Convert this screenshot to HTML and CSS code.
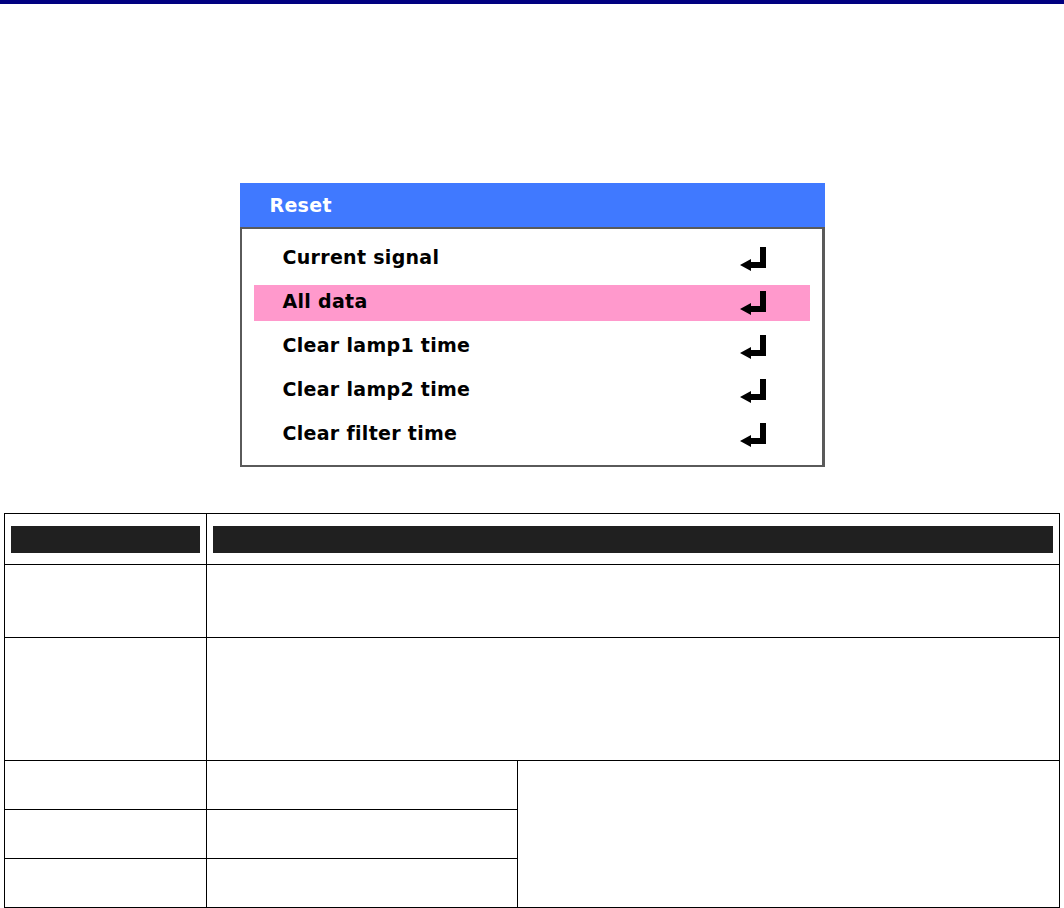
FILE: index.html
```html
<!DOCTYPE html>
<html lang="en">
<head>
<meta charset="utf-8">
<title>Reset</title>
<link rel="stylesheet" href="styles.css">
</head>
<body>
<div class="topbar"></div>
<div class="menu">
  <div class="menu-head">Reset</div>
  <div class="menu-body">
    <div class="item"><span class="label">Current signal</span><svg class="enter" viewBox="0 0 27 24" width="27" height="24"><path d="M20 0H26V21H11V24L0 18L11 12V15H20Z"/></svg></div>
    <div class="item active"><span class="label">All data</span><svg class="enter" viewBox="0 0 27 24" width="27" height="24"><path d="M20 0H26V21H11V24L0 18L11 12V15H20Z"/></svg></div>
    <div class="item"><span class="label">Clear lamp1 time</span><svg class="enter" viewBox="0 0 27 24" width="27" height="24"><path d="M20 0H26V21H11V24L0 18L11 12V15H20Z"/></svg></div>
    <div class="item"><span class="label">Clear lamp2 time</span><svg class="enter" viewBox="0 0 27 24" width="27" height="24"><path d="M20 0H26V21H11V24L0 18L11 12V15H20Z"/></svg></div>
    <div class="item"><span class="label">Clear filter time</span><svg class="enter" viewBox="0 0 27 24" width="27" height="24"><path d="M20 0H26V21H11V24L0 18L11 12V15H20Z"/></svg></div>
  </div>
</div>
<table class="info">
  <colgroup><col class="c1"><col class="c2"><col class="c3"></colgroup>
  <tr class="r-head"><th><div class="bar"></div></th><th colspan="2"><div class="bar"></div></th></tr>
  <tr class="r2"><td></td><td colspan="2"></td></tr>
  <tr class="r3"><td></td><td colspan="2"></td></tr>
  <tr class="r4"><td></td><td></td><td rowspan="3"></td></tr>
  <tr class="r4"><td></td><td></td></tr>
  <tr class="r4"><td></td><td></td></tr>
</table>
</body>
</html>
```
FILE: styles.css
```css
html, body {
  margin: 0;
  padding: 0;
  background: #fff;
}
body {
  font-family: "DejaVu Sans", "Liberation Sans", sans-serif;
  width: 1064px;
  height: 908px;
  overflow: hidden;
}
.topbar {
  height: 4px;
  background: #000080;
}
.menu {
  width: 585px;
  margin: 179px auto 0;
}
.menu-head {
  height: 44px;
  line-height: 44px;
  background: #4079ff;
  color: #fff;
  font-weight: bold;
  font-size: 19px;
  letter-spacing: 0.3px;
  padding-left: 30px;
}
.menu-body {
  border: 2px solid #5a5a5a;
  border-right-width: 3px;
  padding: 12px 12px 12px 12px;
  display: flex;
  flex-direction: column;
  gap: 8px;
}
.item {
  height: 36px;
  display: flex;
  align-items: center;
  justify-content: space-between;
  padding: 0 43px 0 29px;
}
.item.active {
  background: #ff99cc;
}
.label {
  font-weight: bold;
  font-size: 19px;
  letter-spacing: 0.3px;
  color: #000;
  line-height: 32px;
  padding-bottom: 4px;
}
.enter {
  display: block;
  fill: #000;
}
.info {
  margin: 46px 0 0 4px;
  border-collapse: collapse;
  table-layout: fixed;
  width: 1055px;
}
.c1 { width: 202px; }
.c2 { width: 311px; }
.c3 { width: 542px; }
.info th, .info td {
  border: 1px solid #000;
  padding: 0;
}
.info th {
  padding: 11px 6px;
}
.bar {
  height: 27px;
  background: #202020;
}
.r-head { height: 51px; }
.r2 td { height: 72px; }
.r3 td { height: 122px; }
.r4 td { height: 48px; }
```
